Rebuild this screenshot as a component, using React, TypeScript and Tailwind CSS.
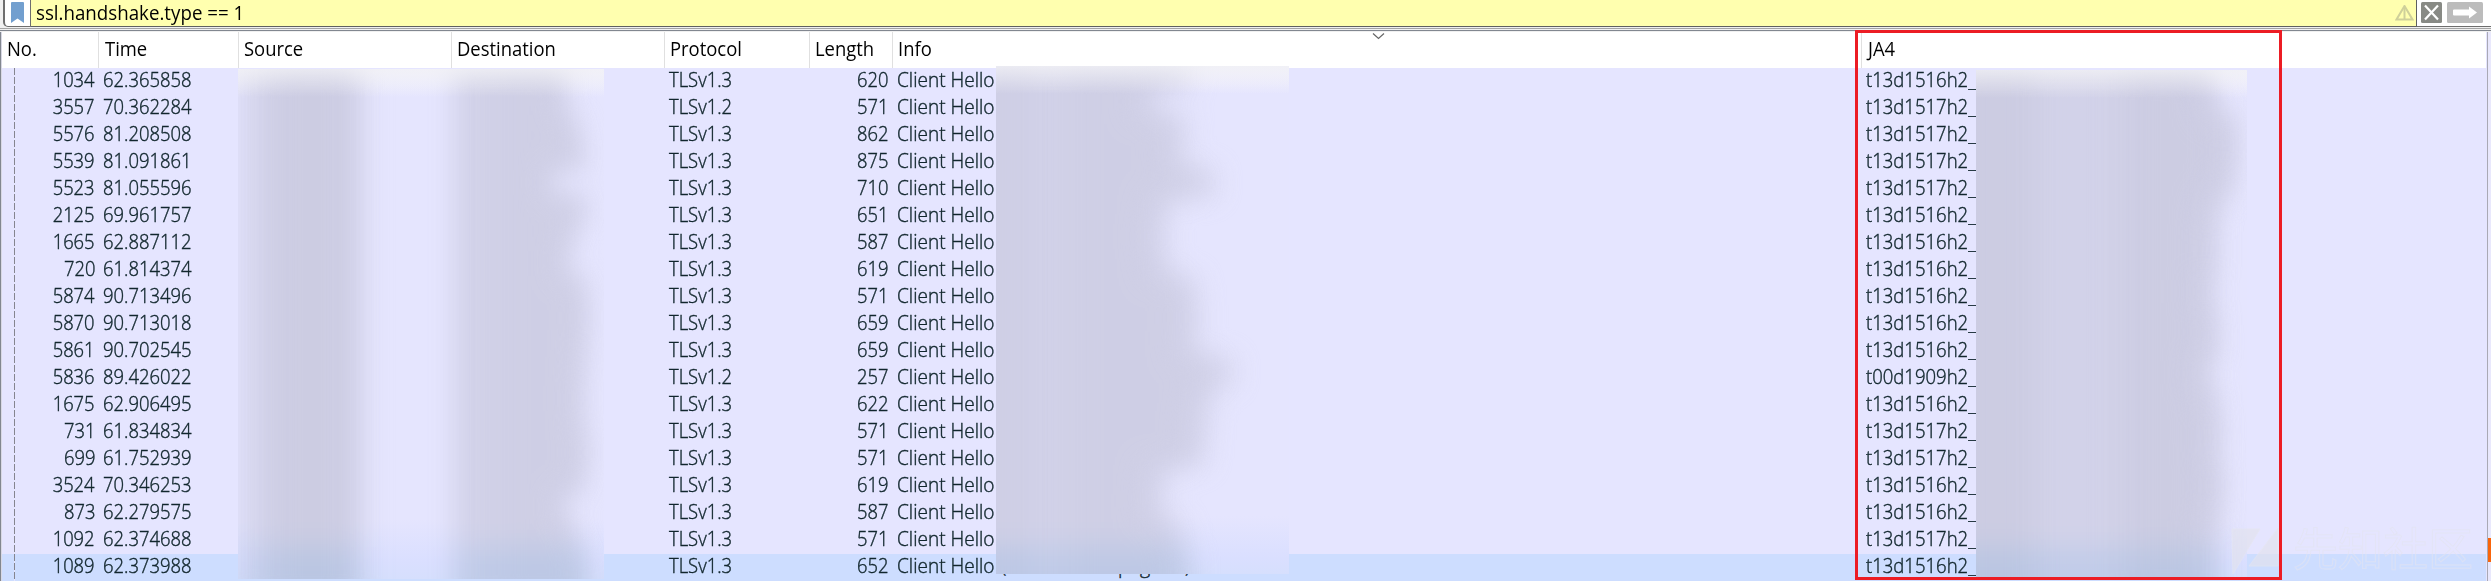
type Packet = {
  no: string;
  time: string;
  proto: string;
  len: string;
  ja4: string;
  dst: number;
  info: number;
  hash: number;
};

const row = (
  no: string,
  time: string,
  proto: string,
  len: string,
  ja4: string,
  info: number,
  dst: number,
  hash: number,
): Packet => ({ no, time, proto, len, ja4, info, dst, hash });

const packets: Packet[] = [
  row('1034', '62.365858', 'TLSv1.3', '620', 't13d1516h2_', 196, 112, 238),
  row('3557', '70.362284', 'TLSv1.2', '571', 't13d1517h2_', 160, 112, 244),
  row('5576', '81.208508', 'TLSv1.3', '862', 't13d1517h2_', 192, 124, 262),
  row('5539', '81.091861', 'TLSv1.3', '875', 't13d1517h2_', 188, 130, 262),
  row('5523', '81.055596', 'TLSv1.3', '710', 't13d1517h2_', 220, 98, 258),
  row('2125', '69.961757', 'TLSv1.3', '651', 't13d1516h2_', 174, 132, 244),
  row('1665', '62.887112', 'TLSv1.3', '587', 't13d1516h2_', 170, 120, 242),
  row('720', '61.814374', 'TLSv1.3', '619', 't13d1516h2_', 174, 114, 242),
  row('5874', '90.713496', 'TLSv1.3', '571', 't13d1516h2_', 202, 132, 238),
  row('5870', '90.713018', 'TLSv1.3', '659', 't13d1516h2_', 204, 134, 242),
  row('5861', '90.702545', 'TLSv1.3', '659', 't13d1516h2_', 202, 132, 244),
  row('5836', '89.426022', 'TLSv1.2', '257', 't00d1909h2_', 238, 130, 234),
  row('1675', '62.906495', 'TLSv1.3', '622', 't13d1516h2_', 216, 128, 242),
  row('731', '61.834834', 'TLSv1.3', '571', 't13d1517h2_', 212, 130, 246),
  row('699', '61.752939', 'TLSv1.3', '571', 't13d1517h2_', 210, 134, 244),
  row('3524', '70.346253', 'TLSv1.3', '619', 't13d1516h2_', 170, 130, 248),
  row('873', '62.279575', 'TLSv1.3', '587', 't13d1516h2_', 168, 110, 246),
  row('1092', '62.374688', 'TLSv1.3', '571', 't13d1517h2_', 188, 122, 242),
  row('1089', '62.373988', 'TLSv1.3', '652', 't13d1516h2_', 196, 132, 242),
];

function FilterBar() {
  return (
    <div className="flex h-[32px] flex-col bg-[#f0f0f0]">
      <div className="flex h-[27px] pl-[3px]">
        <div className="flex h-[27px] w-[28px] justify-center rounded-bl-[5px] border-r border-b border-l-2 border-[#6e6e6e] bg-white pt-[2px]">
          <svg width="13" height="21" viewBox="0 0 13 21">
            <path d="M1 0H12Q13 0 13 1V21L6.500 16.500L0 21V1Q0 0 1 0Z" fill="#729fcf" />
          </svg>
        </div>
        <div className="flex h-[27px] w-[2386px] items-start justify-between border-r border-b border-[#5f6060] bg-[#ffffaf] pl-[5px]">
          <span className="origin-left scale-x-[0.96] leading-[25px] whitespace-pre text-black">
            ssl.handshake.type == 1
          </span>
          <svg className="mt-[5px] mr-[2px]" width="19" height="16" viewBox="0 0 19 16" fill="none" stroke="#cfd09a" strokeWidth="2">
            <path d="M9.500 1L17.500 14.500H1.500Z" />
            <path d="M9.500 3V14" />
          </svg>
        </div>
        <div className="flex h-[27px] flex-1 items-start gap-[5px] border-b border-[#6e6e6e] bg-white pt-[2px] pl-[4px]">
          <svg width="21" height="21" viewBox="0 0 21 21">
            <rect width="21" height="21" rx="1.500" fill="#888a85" />
            <path d="M4 3.500L17 17.500M17 3.500L4 17.500" stroke="#fff" strokeWidth="2.200" />
          </svg>
          <svg width="36" height="21" viewBox="0 0 36 21">
            <rect width="36" height="21" rx="1.500" fill="#bcbcbc" />
            <path d="M7 7.500H22V4.500L30 10.500L22 16.500V13.500H7Q6 13.500 6 12.500V8.500Q6 7.500 7 7.500Z" fill="#fff" />
          </svg>
        </div>
      </div>
      <div className="mt-px h-px bg-[#a5a5a5]" />
      <div className="mt-px h-px bg-[#828790]" />
    </div>
  );
}

function HeaderCell({ label, className }: { label: string; className: string }) {
  return (
    <div className={`flex h-[36px] shrink-0 pt-[5px] ${className}`}>
      <span className="origin-left scale-x-[0.945] leading-[24px] text-black">{label}</span>
    </div>
  );
}

function Header() {
  return (
    <div className="flex h-[36px] bg-white">
      <HeaderCell label="No." className="w-[97px] border-r border-[#e0e0e0] pl-[5px]" />
      <HeaderCell label="Time" className="w-[140px] border-r border-[#e0e0e0] pl-[6px]" />
      <HeaderCell label="Source" className="w-[213px] border-r border-[#e0e0e0] pl-[5px]" />
      <HeaderCell label="Destination" className="w-[213px] border-r border-[#e0e0e0] pl-[5px]" />
      <HeaderCell label="Protocol" className="w-[145px] border-r border-[#e0e0e0] pl-[5px]" />
      <HeaderCell label="Length" className="w-[83px] border-r border-[#e0e0e0] pl-[5px]" />
      <div className="flex w-[969px] shrink-0 border-r border-[#e0e0e0]">
        <HeaderCell label="Info" className="w-[479px] pl-[5px]" />
        <svg className="mt-px" width="13" height="7" viewBox="0 0 13 7" fill="none" stroke="#666" strokeWidth="1.200">
          <path d="M1 0.500L6.500 5.500L12 0.500" />
        </svg>
      </div>
      <HeaderCell label="JA4" className="flex-1 pl-[6px]" />
    </div>
  );
}

function PacketRow({ p, selected }: { p: Packet; selected: boolean }) {
  return (
    <div
      className={`flex h-[27px] shrink-0 items-start font-light leading-[24px] text-[#12272e] [-webkit-text-stroke:0.4px_#12272e] ${
        selected ? 'bg-[#cdddff]' : 'bg-[#e5e5ff]'
      }`}
    >
      <div className="flex w-[93px] shrink-0 justify-end">
        <span className="origin-right scale-x-[0.94]">{p.no}</span>
      </div>
      <div className="w-[574px] shrink-0 pl-[8px]">
        <span className="inline-block origin-left scale-x-[0.945]">{p.time}</span>
      </div>
      <div className="w-[130px] shrink-0">
        <span className="inline-block origin-left scale-x-[0.945]">{p.proto}</span>
      </div>
      <div className="flex w-[89px] shrink-0 justify-end">
        <span className="origin-right scale-x-[0.94]">{p.len}</span>
      </div>
      <div className="flex w-[978px] shrink-0 pl-[9px]">
        <span className="w-[104px] shrink-0 origin-left scale-x-[0.978] whitespace-nowrap">Client Hello</span>
        {selected && (
          <>
            <span className="w-[117px]">(</span>
            <span className="w-[67px]">pag</span>
            <span>)</span>
          </>
        )}
      </div>
      <span className="origin-left scale-x-[0.95]">{p.ja4}</span>
    </div>
  );
}

function Bars({ widths, className }: { widths: number[]; className: string }) {
  return (
    <div className={`absolute flex flex-col ${className}`}>
      {widths.map((w, i) => (
        <div
          key={i}
          className={i > 17 ? 'h-[60px] bg-[#b9c5e1]' : 'h-[27px] bg-[#cbcbe1]'}
          style={{ width: w }}
        />
      ))}
    </div>
  );
}

function MaskBase() {
  return (
    <div className="absolute inset-0 bg-[linear-gradient(to_bottom,#f4f3ff_0px,#e5e5fe_28px,#e5e5fe_450px,#dadfff_492px,#d6dffd_100%)]" />
  );
}

function MaskTop() {
  return <div className="absolute inset-x-0 top-0 h-[28px] bg-[linear-gradient(to_bottom,#f0f0f4c0,#e5e5fe00)]" />;
}

export default function App() {
  return (
    <div className="relative h-[581px] w-[2491px] overflow-hidden bg-[#e5e5ff] font-['Open_Sans',sans-serif] text-[19.5px]">
      <FilterBar />
      <div className="flex h-[549px]">
        <div className="w-[2px] shrink-0 border-l border-[#828790] bg-[#d8d8e4]" />
        <div className="flex w-[2484px] shrink-0 flex-col overflow-hidden">
          <Header />
          {packets.map((p, i) => (
            <PacketRow key={p.no} p={p} selected={i === packets.length - 1} />
          ))}
        </div>
        <div className="ml-px w-px shrink-0 bg-[#a9a9b4]" />
        <div className="flex flex-1 flex-col bg-[#e9e8fc] pt-[506px]">
          <div className="h-[24px] bg-[#f9650c]" />
        </div>
      </div>

      <div className="absolute top-[68px] left-[13.500px] h-[513px] w-[1.500px] bg-[repeating-linear-gradient(to_bottom,#85858f_0px,#85858f_7px,#e5e5ff_7px,#e5e5ff_9px)]" />

      <div className="absolute top-[69px] left-[238px] h-[510px] w-[366px] overflow-hidden">
        <MaskBase />
        <Bars className="top-[-8px] left-[6px] opacity-70 blur-[16px]" widths={packets.map(() => 116)} />
        <Bars className="top-[-8px] left-[34px] opacity-80 blur-[14px]" widths={packets.map(() => 80)} />
        <Bars className="top-[-8px] left-[216px] opacity-75 blur-[13px]" widths={packets.map((p) => p.dst)} />
        <Bars className="top-[-8px] left-[260px] opacity-40 blur-[14px]" widths={packets.map((p) => p.dst - 50)} />
        <MaskTop />
      </div>

      <div className="absolute top-[66px] left-[996px] h-[508px] w-[293px] overflow-hidden">
        <MaskBase />
        <Bars className="top-[-5px] left-[-30px] opacity-75 blur-[14px]" widths={packets.map((p) => p.info + 28)} />
        <Bars className="top-[-5px] left-[-10px] opacity-40 blur-[10px]" widths={packets.map(() => 45)} />
        <Bars className="top-[-5px] left-[75px] opacity-40 blur-[14px]" widths={packets.map((p) => p.info - 95)} />
        <MaskTop />
      </div>

      <div className="absolute top-[70px] left-[1976px] h-[507px] w-[271px] overflow-hidden">
        <MaskBase />
        <Bars className="top-[-8px] left-[-30px] opacity-70 blur-[12px]" widths={packets.map((p) => p.hash + 28)} />
        <Bars className="top-[-8px] left-[-20px] opacity-85 blur-[14px]" widths={packets.map(() => 80)} />
        <Bars className="top-[-8px] left-[146px] opacity-80 blur-[16px]" widths={packets.map((p) => p.hash - 158)} />
        <MaskTop />
      </div>

      <div className="absolute top-[519px] left-[2231px] flex items-start gap-[14px] opacity-65">
        <svg className="mt-[9px]" width="48" height="48" viewBox="0 0 48 48" fill="#e3e3ee" stroke="#e6e6ee" strokeWidth="1">
          <path d="M1 1H29L2 46Z" />
          <path d="M47 0V38H18Z" />
        </svg>
        <span className="font-['Noto_Sans_CJK_SC',sans-serif] text-[45px] leading-[56px] whitespace-nowrap text-transparent [-webkit-text-stroke:1px_#e3e4f1]">
          先知社区
        </span>
      </div>

      <div className="absolute top-[30px] left-[1855px] h-[550px] w-[427px] border-3 border-[#ec1c24]" />
    </div>
  );
}
